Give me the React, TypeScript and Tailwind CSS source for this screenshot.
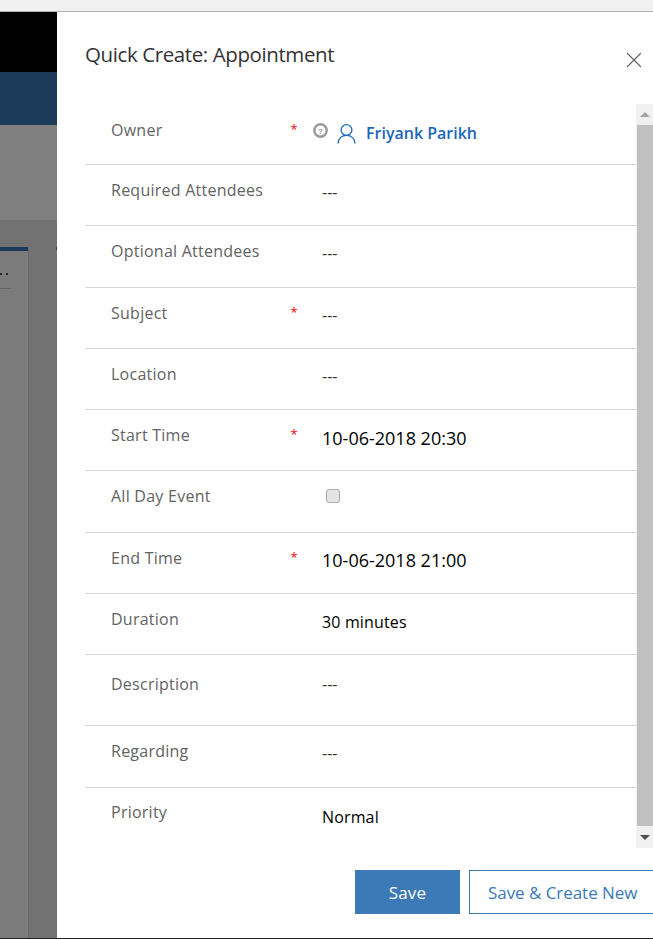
import React from 'react';
import { X } from 'lucide-react';

const font = "font-['Open_Sans','Noto_Sans',sans-serif]";

type Row = {
    label: string;
    value?: string;
    required?: boolean;
    height: string;
    labelPad: string;
    valuePad: string;
    kind?: 'date' | 'strong' | 'owner' | 'check';
};

const rows: Row[] = [
    { label: 'Owner', required: true, height: 'h-[61px]', labelPad: 'pt-[14px]', valuePad: 'pt-[17px]', kind: 'owner' },
    { label: 'Required Attendees', value: '---', height: 'h-[61px]', labelPad: 'pt-[13px]', valuePad: 'pt-[15px]' },
    { label: 'Optional Attendees', value: '---', height: 'h-[62px]', labelPad: 'pt-[13px]', valuePad: 'pt-[15px]' },
    { label: 'Subject', value: '---', required: true, height: 'h-[61px]', labelPad: 'pt-[13px]', valuePad: 'pt-[15px]' },
    { label: 'Location', value: '---', height: 'h-[61px]', labelPad: 'pt-[13px]', valuePad: 'pt-[15px]' },
    { label: 'Start Time', value: '10-06-2018 20:30', required: true, height: 'h-[61px]', labelPad: 'pt-[13px]', valuePad: 'pt-[16px]', kind: 'date' },
    { label: 'All Day Event', height: 'h-[62px]', labelPad: 'pt-[13px]', valuePad: 'pt-[18px]', kind: 'check' },
    { label: 'End Time', value: '10-06-2018 21:00', required: true, height: 'h-[61px]', labelPad: 'pt-[13px]', valuePad: 'pt-[15px]', kind: 'date' },
    { label: 'Duration', value: '30 minutes', height: 'h-[61px]', labelPad: 'pt-[13px]', valuePad: 'pt-[16px]', kind: 'strong' },
    { label: 'Description', value: '---', height: 'h-[71px]', labelPad: 'pt-[17px]', valuePad: 'pt-[17px]' },
    { label: 'Regarding', value: '---', height: 'h-[62px]', labelPad: 'pt-[13px]', valuePad: 'pt-[15px]' },
    { label: 'Priority', value: 'Normal', height: 'h-[61px]', labelPad: 'pt-[12px]', valuePad: 'pt-[17px]', kind: 'strong' },
];

const OwnerValue = () => (
    <div className="flex items-center">
        <svg width="15" height="15" viewBox="0 0 15 15" className="mr-[9px] -mt-[5px]">
            <circle cx="7.5" cy="7.5" r="6.2" fill="none" stroke="#999" strokeWidth="2.4" />
            <text x="7.5" y="10.5" textAnchor="middle" fontSize="8" fontWeight="700" fill="#999" fontFamily="Liberation Sans">?</text>
        </svg>
        <svg width="19" height="21" viewBox="0 0 19 21" fill="none" stroke="#1f69bd" strokeWidth="1.3" className="mr-[10px]">
            <circle cx="9.5" cy="7" r="5.4" />
            <path d="M1 20.5c0-4.8 3.6-8.1 8.5-8.1s8.5 3.3 8.5 8.1" />
        </svg>
        <span className="text-[16px] font-semibold text-[#1a66ba]">Friyank Parikh</span>
    </div>
);

const FormRow = ({ row, last }: { row: Row; last: boolean }) => (
    <div className={`flex ${row.height} ${last ? '' : 'border-b border-[#d6d6d6]'}`}>
        <div className={`w-[213px] pl-[26px] ${row.labelPad} text-[16px] leading-[24px] text-[#636363] tracking-[0.25px] flex justify-between`}>
            <span>{row.label}</span>
            {row.required && <span className="text-[#f00] text-[13px] leading-[22px]">*</span>}
        </div>
        <div className={`${row.kind === 'owner' ? 'pl-[15px]' : 'pl-[24px]'} ${row.valuePad} flex-1`}>
            {row.kind === 'owner' && <OwnerValue />}
            {row.kind === 'check' && (
                <div className="ml-[4px] w-[14px] h-[14px] rounded-[3px] border border-[#a8a8a8] bg-[#e4e4e4]" />
            )}
            {row.kind === 'date' && <span className="text-[18px] leading-[24px] text-black font-medium">{row.value}</span>}
            {row.kind === 'strong' && <span className="text-[16px] leading-[24px] text-black font-medium tracking-[0.15px]">{row.value}</span>}
            {!row.kind && <span className="text-[16px] leading-[24px] text-[#333] font-medium">{row.value}</span>}
        </div>
    </div>
);

const App: React.FC = () => {
    return (
        <div className={`w-[653px] h-[939px] overflow-hidden flex flex-col bg-white ${font}`}>
            <div className="h-[12px] shrink-0 bg-[#f0f0f0] border-b border-[#b4b4b4]" />
            <div className="flex flex-1 min-h-0">
                {/* page dimmed behind the dialog */}
                <div className="w-[57px] shrink-0 flex flex-col">
                    <div className="h-[60px] bg-black" />
                    <div className="h-[53px] bg-[#1c3a5a]" />
                    <div className="h-[95px] bg-[#808080]" />
                    <div className="flex-1 flex flex-col bg-[#727272]">
                        <div className="h-[27px]" />
                        <div className="flex-1 flex">
                            <div className="w-[29px] border-r border-[#6a6a6a] bg-[#7b7b7b]">
                                <div className="h-[4px] bg-[#1c3a5a]" />
                                <div className="h-[24px] flex items-end gap-[4px]">
                                    <div className="w-[2px] h-[2px] bg-[#222]" />
                                    <div className="w-[2px] h-[2px] bg-[#222]" />
                                </div>
                                <div className="mt-[13px] h-px w-[11px] bg-[#666]" />
                            </div>
                            <div className="flex-1">
                                <div className="h-[3px] w-[1px] ml-auto bg-[#1c3a5a]" />
                            </div>
                        </div>
                    </div>
                </div>
                {/* dialog */}
                <div className="flex-1 min-w-0 flex flex-col">
                    <div className="h-[92px] shrink-0 flex pl-[28px]">
                        <h1 className="pt-[25px] text-[20.5px] leading-[34px] text-[#333] tracking-[-0.4px]">Quick Create: Appointment</h1>
                        <X className="ml-auto mr-[6px] mt-[35px] text-[#666]" size={26} strokeWidth={1.2} absoluteStrokeWidth />
                    </div>
                    <div className="flex h-[744px] shrink-0 pl-[28px]">
                        <div className="w-[551px]">
                            {rows.map((row, i) => <FormRow key={row.label} row={row} last={i === rows.length - 1} />)}
                        </div>
                        <div className="w-[17px] bg-[#f0f0f0] flex flex-col items-center">
                            <div className="h-[21px] flex items-center justify-center">
                                <div className="w-0 h-0 border-x-[5px] border-x-transparent border-b-[5px] border-b-[#a3a3a3]" />
                            </div>
                            <div className="flex-1 w-full bg-[#c0c0c0] ml-[1px]" />
                            <div className="h-[22px] flex items-center justify-center">
                                <div className="w-0 h-0 border-x-[5px] border-x-transparent border-t-[5px] border-t-[#505050]" />
                            </div>
                        </div>
                    </div>
                    <div className="flex pl-[298px] pt-[22px]">
                        <button className="w-[105px] h-[44px] shrink-0 bg-[#3b79b7] text-white text-[17px] tracking-[0.2px] pt-[2px]">Save</button>
                        <button className="ml-[9px] w-[190px] h-[44px] shrink-0 border border-[#3b79b7] text-[#3b79b7] text-[17px] text-left pl-[18px] tracking-[-0.05px] pt-[2px]">Save &amp; Create New</button>
                    </div>
                </div>
            </div>
            <div className="h-px shrink-0 bg-[#222]" />
        </div>
    );
};

export default App;
